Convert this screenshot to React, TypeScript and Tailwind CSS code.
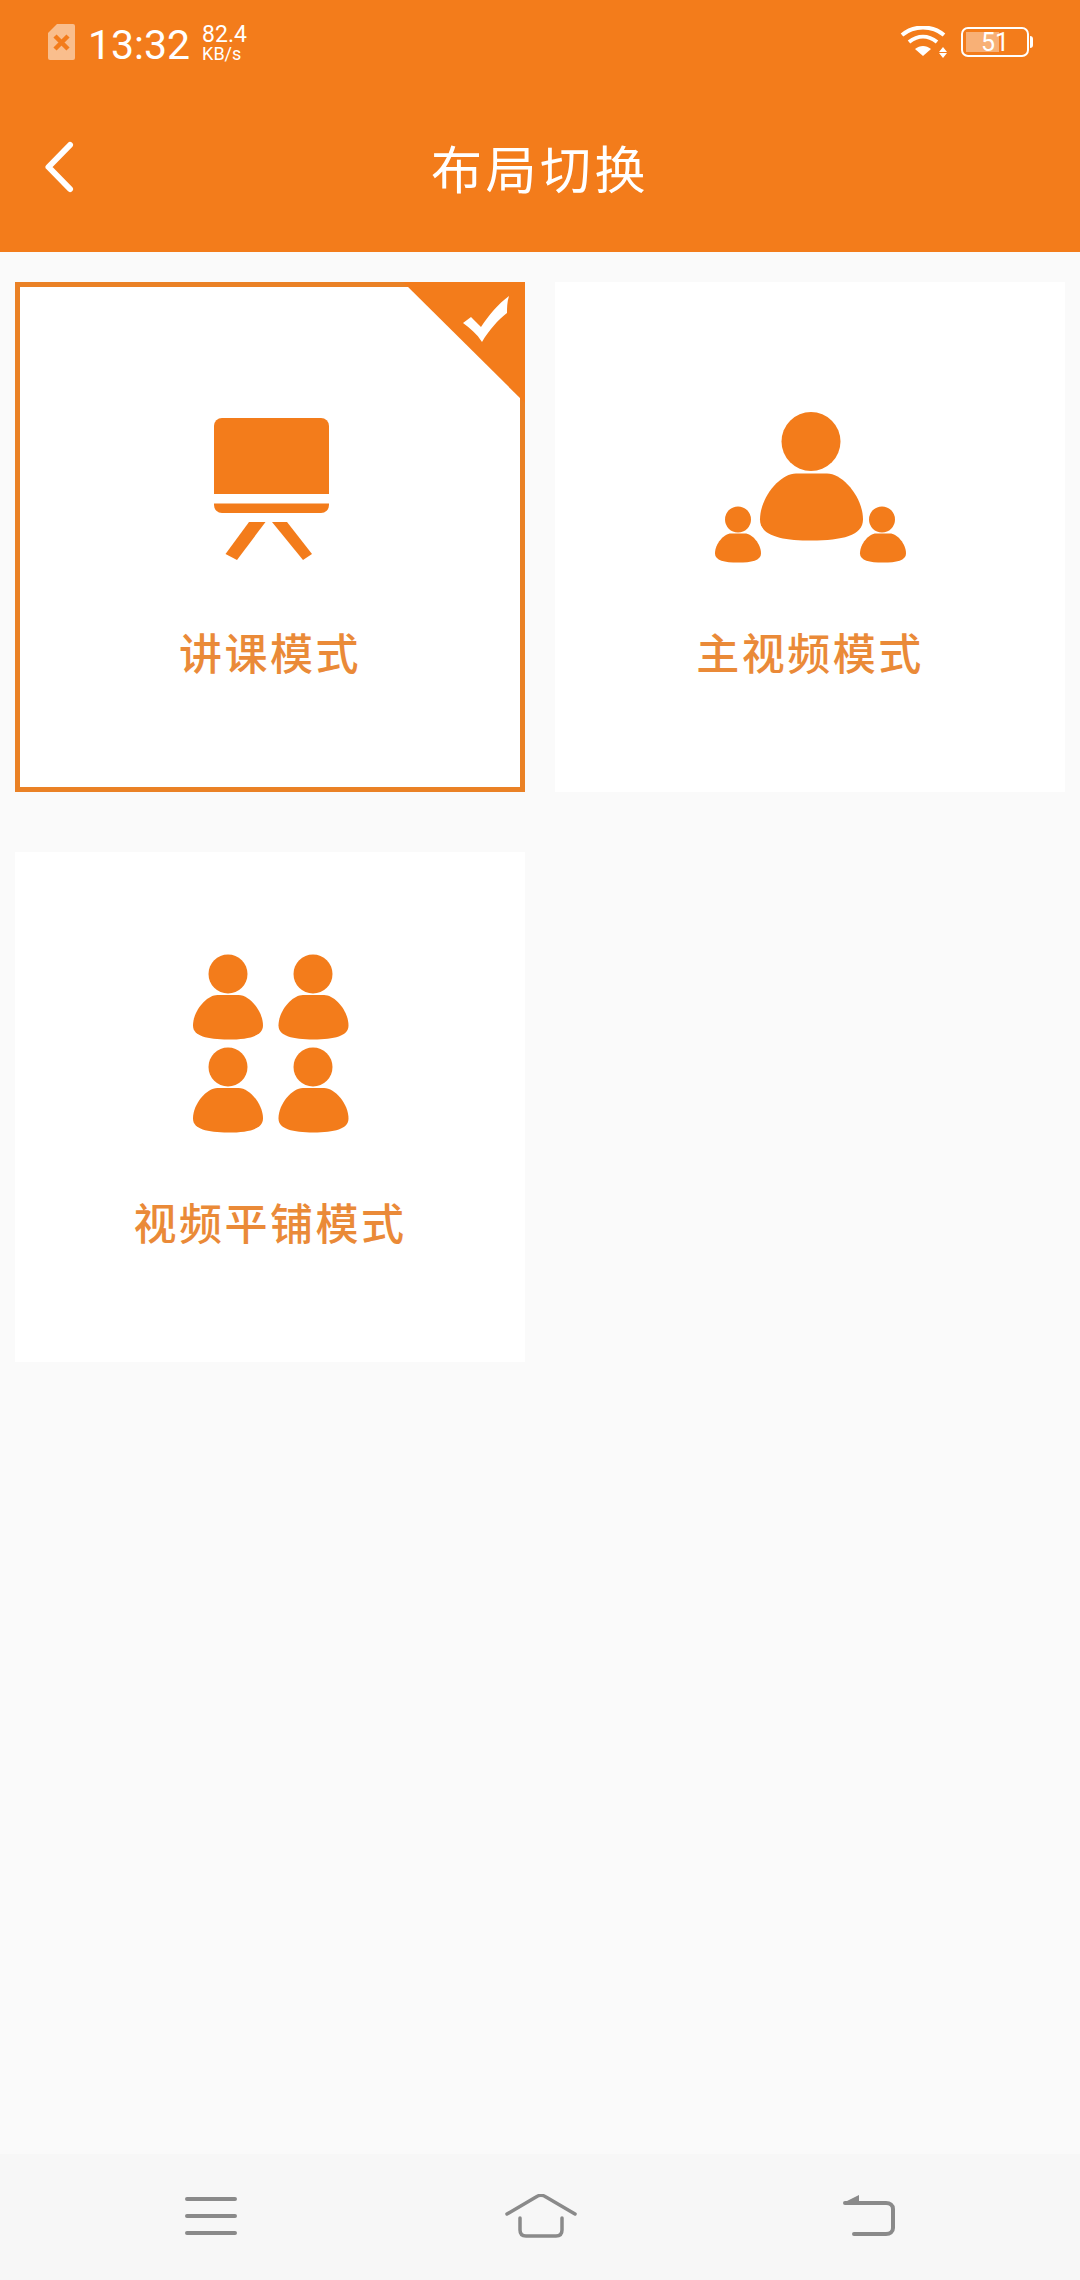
const FONT = "font-['Roboto','Liberation_Sans',sans-serif]";
const ORANGE = '#f37c1b';

// Person bust, body drawn in a 103x67 box then scaled into place
const BODY = 'M36 0H67C83 0 103 24 103 46C103 62 82 67 51.500 67C21 67 0 62 0 46C0 24 20 0 36 0Z';

function Person({ cx, cy, r, x, y, w, h }: { cx: number; cy: number; r: number; x: number; y: number; w: number; h: number }) {
  return (
    <>
      <circle cx={cx} cy={cy} r={r} />
      <path d={BODY} transform={`translate(${x} ${y}) scale(${w / 103} ${h / 67})`} />
    </>
  );
}

function LectureIcon() {
  return (
    <svg className="ml-[2px]" width="115" height="145" viewBox="0 0 115 145" fill={ORANGE}>
      <path d="M0 8a8 8 0 0 1 8-8h99a8 8 0 0 1 8 8v68H0Z" />
      <path d="M0 85.500h115v1.500a8 8 0 0 1-8 8H8a8 8 0 0 1-8-8Z" />
      <path d="M35 104H51.500L23 142L11.500 136Z" />
      <path d="M58 104H73L98 136L89 142Z" />
    </svg>
  );
}

function MainVideoIcon() {
  return (
    <svg className="ml-[1px]" width="192" height="152" viewBox="0 0 192 152" fill={ORANGE}>
      <Person cx={96} cy={30.500} r={29.500} x={45} y={62.500} w={103} h={67} />
      <Person cx={23} cy={108.500} r={13} x={0} y={122.500} w={46} h={29} />
      <Person cx={167} cy={108.500} r={13} x={145} y={122.500} w={46} h={29} />
    </svg>
  );
}

function TileIcon() {
  return (
    <svg className="ml-[2px]" width="156" height="179" viewBox="0 0 156 179" fill={ORANGE}>
      <Person cx={35} cy={20} r={19.500} x={0} y={41} w={70} h={44.500} />
      <Person cx={120} cy={20} r={19.500} x={85.500} y={41} w={70} h={44.500} />
      <Person cx={35} cy={113} r={19.500} x={0} y={134} w={70} h={44.500} />
      <Person cx={120} cy={113} r={19.500} x={85.500} y={134} w={70} h={44.500} />
    </svg>
  );
}

function ModeCard({ label, icon, selected }: { label: string; icon: React.ReactNode; selected?: boolean }) {
  return (
    <div className={`relative flex h-[510px] flex-col items-center border-[5px] bg-white ${selected ? 'border-[#ea8125]' : 'border-white'}`}>
      <div className="flex h-[276px] items-end">{icon}</div>
      <p className="mt-[58px] text-[43px] leading-[60px] font-medium tracking-[2.500px] text-[#ea8a38] font-['Noto_Sans_CJK_SC',sans-serif]">{label}</p>
      {selected && (
        <svg className="absolute -top-[5px] -right-[5px]" width="122" height="121" viewBox="0 0 122 121">
          <path d="M0 0H122V121Z" fill={ORANGE} />
          <path d="M60 41L68 35L78 45C86 33 95 22 106 14C104 20 104 26 104 31C95 38 86 48 79 60C74 52 67 46 60 41Z" fill="#fff" />
        </svg>
      )}
    </div>
  );
}

function StatusBar() {
  return (
    <div className={`flex h-[60px] items-center justify-between pt-[24px] pr-[51px] pl-[48px] text-white ${FONT}`}>
      <div className="flex items-center">
        <svg width="27" height="36" viewBox="0 0 27 36">
          <path d="M9 0H25a2 2 0 0 1 2 2V34a2 2 0 0 1-2 2H2a2 2 0 0 1-2-2V9Z" fill="#fff" fillOpacity="0.5" />
          <path d="M7 12L20 25M20 12L7 25" stroke={ORANGE} strokeWidth="4.500" />
        </svg>
        <span className="mt-[6px] ml-[13px] text-[41px] leading-[40px]">13:32</span>
        <div className="mt-[2px] ml-[12px] flex flex-col">
          <span className="text-[23px] leading-[22px]">82.4</span>
          <span className="text-[18px] leading-[16px]">KB/s</span>
        </div>
      </div>
      <div className="flex items-center">
        <svg width="50" height="32" viewBox="0 0 50 32" fill="none">
          <path d="M2 9C14-1 32-1 44 9" stroke="#fff" strokeWidth="4" />
          <path d="M9 16C18 9 28 9 37 16" stroke="#fff" strokeWidth="4" />
          <path d="M15 23C20 19 26 19 31 23L23 30Z" fill="#fff" />
          <path d="M43 21l4 5h-8ZM39 27h8l-4 5Z" fill="#fff" />
        </svg>
        <div className="relative ml-[11px] h-[30px] w-[68px] rounded-[7px] border-2 border-white">
          <div className="absolute top-[3px] left-[3px] h-[20px] w-[33px] bg-white/40" />
          <span className="absolute inset-0 flex items-center justify-center text-[25px] leading-none">51</span>
          <div className="absolute top-[7px] -right-[6px] h-[12px] w-[3px] rounded-r-full bg-white" />
        </div>
      </div>
    </div>
  );
}

function NavBar() {
  return (
    <div className="flex h-[126px] items-center bg-[#f7f7f7] pb-[2px]">
      <svg className="ml-[185px]" width="52" height="40" viewBox="0 0 52 40" stroke="#8a8a8a" strokeWidth="4" strokeLinecap="round">
        <path d="M2 3H50M2 20H50M2 37H50" />
      </svg>
      <svg className="ml-[268px]" width="72" height="44" viewBox="0 0 72 44" fill="none" stroke="#8a8a8a" strokeWidth="3.500" strokeLinecap="round" strokeLinejoin="round">
        <path d="M2 20L31 3C34 1 38 1 41 3L70 20" />
        <path d="M15 24V36C15 40 17 42 21 42H51C55 42 57 40 57 36V24" />
      </svg>
      <svg className="ml-[266px]" width="52" height="44" viewBox="0 0 52 44" fill="none" stroke="#8a8a8a" strokeWidth="4" strokeLinecap="round" strokeLinejoin="round">
        <path d="M2 9H43C47 9 50 11 50 15V34C50 38 47 40 43 40H11" />
        <path d="M2 8L16 1V9H2Z" fill="#8a8a8a" stroke="none" />
      </svg>
    </div>
  );
}

export default function App() {
  return (
    <div className="flex h-[2280px] w-[1080px] flex-col bg-[#fafafa] font-['Noto_Sans_CJK_SC',sans-serif]">
      <header className="h-[252px] bg-[#f37c1b]">
        <StatusBar />
        <div className="mt-[75px] grid grid-cols-[1fr_auto_1fr] items-center">
          <svg className="ml-[42px]" width="34" height="56" viewBox="0 0 34 56" fill="none" stroke="#fff" strokeWidth="6" strokeLinecap="round" strokeLinejoin="round">
            <path d="M28 6L6.500 28L28 50" />
          </svg>
          <h1 className="text-[51px] leading-[64px] tracking-[3.500px] font-normal text-white">布局切换</h1>
          <div />
        </div>
      </header>
      <main className="grid flex-1 grid-cols-2 content-start gap-x-[30px] gap-y-[60px] px-[15px] pt-[30px]">
        <ModeCard label="讲课模式" icon={<LectureIcon />} selected />
        <ModeCard label="主视频模式" icon={<MainVideoIcon />} />
        <ModeCard label="视频平铺模式" icon={<TileIcon />} />
      </main>
      <NavBar />
    </div>
  );
}
